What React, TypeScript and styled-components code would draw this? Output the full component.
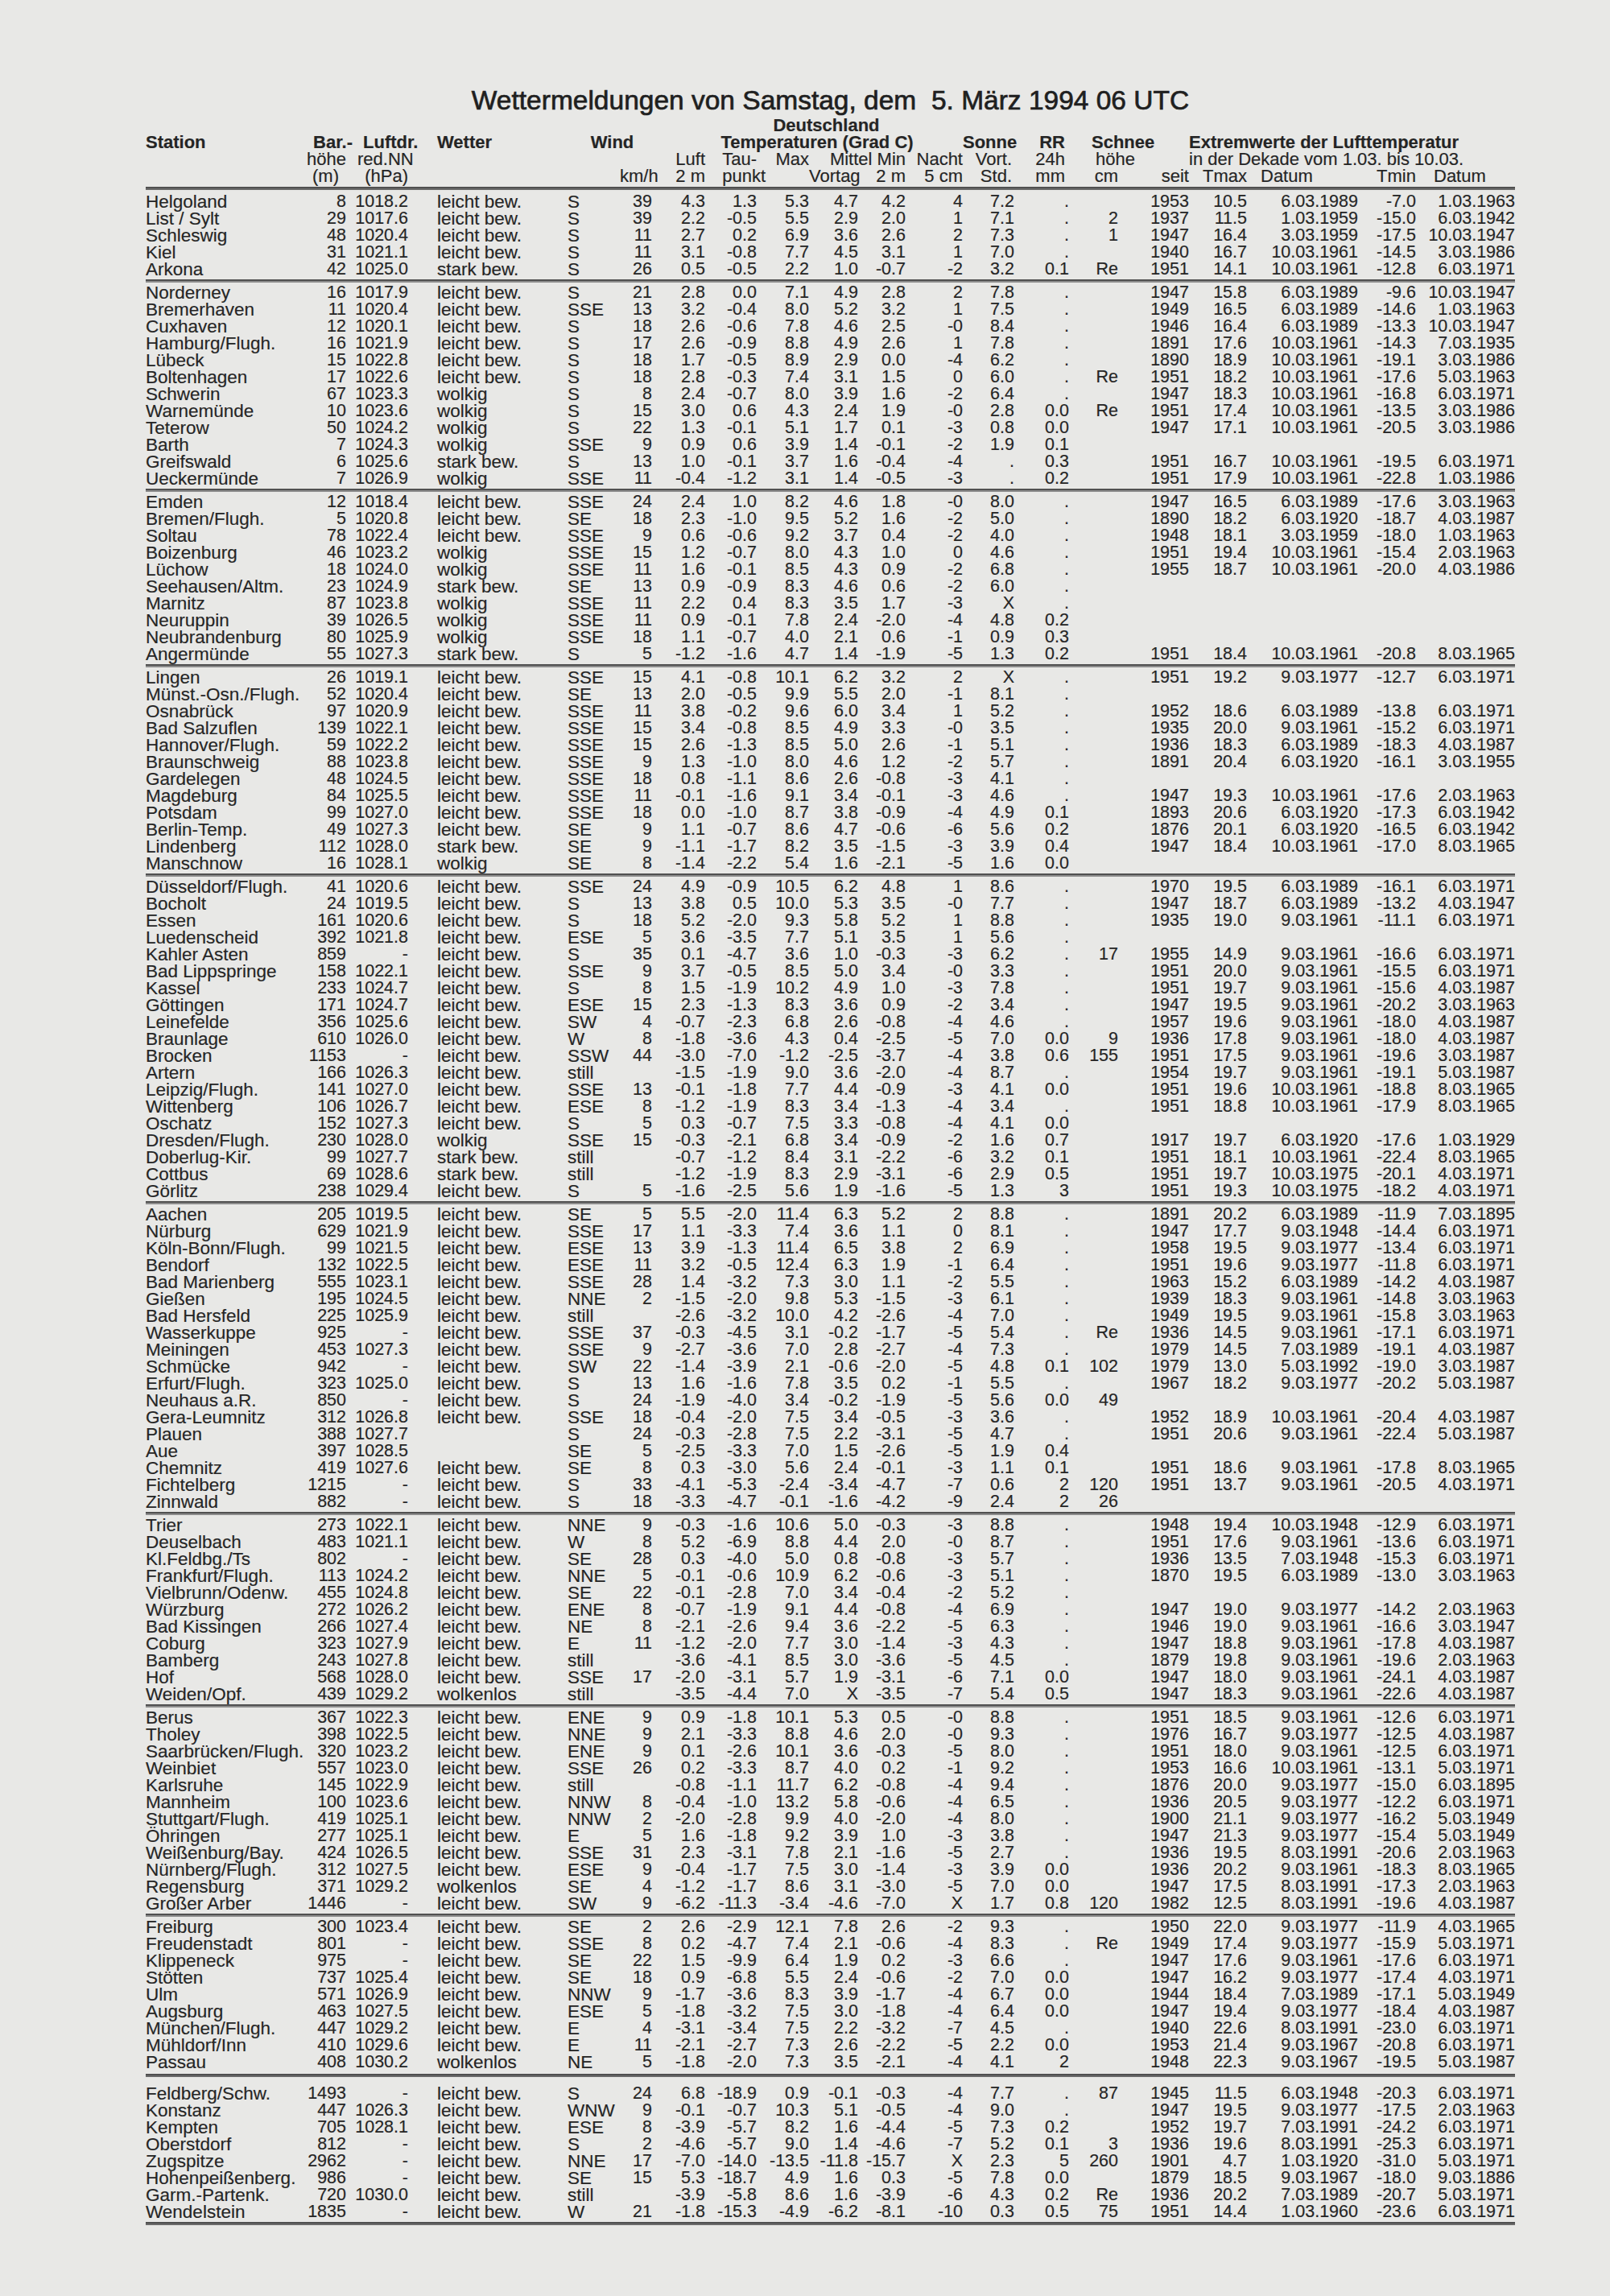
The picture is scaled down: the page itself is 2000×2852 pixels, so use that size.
import React from "react";
import styled, { createGlobalStyle } from "styled-components";

const GlobalStyle = createGlobalStyle`
  html, body {
    margin: 0;
    padding: 0;
    background: #e8e8e6;
  }
`;

const COLS = [190, 59, 77, 198, 65, 40, 66, 64, 65, 61, 59, 71, 64, 68, 61, 88, 72, 138, 72, 123];
const TEMPLATE = COLS.map((w) => `${w}px`).join(" ");

type Align = "left" | "right" | "center";

const COL_ALIGN: { align: Align; pad?: number; text?: boolean }[] = COLS.map((_, i) => {
  if (i === 0) return { align: "left", text: true };
  if (i === 3) return { align: "left", pad: 36, text: true };
  if (i === 4) return { align: "left", text: true };
  return { align: "right" };
});

const GROUPS: string[][] = [
  [
    "Helgoland|8|1018.2|leicht bew.|S|39|4.3|1.3|5.3|4.7|4.2|4|7.2|.||1953|10.5|6.03.1989|-7.0|1.03.1963",
    "List / Sylt|29|1017.6|leicht bew.|S|39|2.2|-0.5|5.5|2.9|2.0|1|7.1|.|2|1937|11.5|1.03.1959|-15.0|6.03.1942",
    "Schleswig|48|1020.4|leicht bew.|S|11|2.7|0.2|6.9|3.6|2.6|2|7.3|.|1|1947|16.4|3.03.1959|-17.5|10.03.1947",
    "Kiel|31|1021.1|leicht bew.|S|11|3.1|-0.8|7.7|4.5|3.1|1|7.0|.||1940|16.7|10.03.1961|-14.5|3.03.1986",
    "Arkona|42|1025.0|stark bew.|S|26|0.5|-0.5|2.2|1.0|-0.7|-2|3.2|0.1|Re|1951|14.1|10.03.1961|-12.8|6.03.1971",
  ],
  [
    "Norderney|16|1017.9|leicht bew.|S|21|2.8|0.0|7.1|4.9|2.8|2|7.8|.||1947|15.8|6.03.1989|-9.6|10.03.1947",
    "Bremerhaven|11|1020.4|leicht bew.|SSE|13|3.2|-0.4|8.0|5.2|3.2|1|7.5|.||1949|16.5|6.03.1989|-14.6|1.03.1963",
    "Cuxhaven|12|1020.1|leicht bew.|S|18|2.6|-0.6|7.8|4.6|2.5|-0|8.4|.||1946|16.4|6.03.1989|-13.3|10.03.1947",
    "Hamburg/Flugh.|16|1021.9|leicht bew.|S|17|2.6|-0.9|8.8|4.9|2.6|1|7.8|.||1891|17.6|10.03.1961|-14.3|7.03.1935",
    "Lübeck|15|1022.8|leicht bew.|S|18|1.7|-0.5|8.9|2.9|0.0|-4|6.2|.||1890|18.9|10.03.1961|-19.1|3.03.1986",
    "Boltenhagen|17|1022.6|leicht bew.|S|18|2.8|-0.3|7.4|3.1|1.5|0|6.0|.|Re|1951|18.2|10.03.1961|-17.6|5.03.1963",
    "Schwerin|67|1023.3|wolkig|S|8|2.4|-0.7|8.0|3.9|1.6|-2|6.4|.||1947|18.3|10.03.1961|-16.8|6.03.1971",
    "Warnemünde|10|1023.6|wolkig|S|15|3.0|0.6|4.3|2.4|1.9|-0|2.8|0.0|Re|1951|17.4|10.03.1961|-13.5|3.03.1986",
    "Teterow|50|1024.2|wolkig|S|22|1.3|-0.1|5.1|1.7|0.1|-3|0.8|0.0||1947|17.1|10.03.1961|-20.5|3.03.1986",
    "Barth|7|1024.3|wolkig|SSE|9|0.9|0.6|3.9|1.4|-0.1|-2|1.9|0.1||||||",
    "Greifswald|6|1025.6|stark bew.|S|13|1.0|-0.1|3.7|1.6|-0.4|-4|.|0.3||1951|16.7|10.03.1961|-19.5|6.03.1971",
    "Ueckermünde|7|1026.9|wolkig|SSE|11|-0.4|-1.2|3.1|1.4|-0.5|-3|.|0.2||1951|17.9|10.03.1961|-22.8|1.03.1986",
  ],
  [
    "Emden|12|1018.4|leicht bew.|SSE|24|2.4|1.0|8.2|4.6|1.8|-0|8.0|.||1947|16.5|6.03.1989|-17.6|3.03.1963",
    "Bremen/Flugh.|5|1020.8|leicht bew.|SE|18|2.3|-1.0|9.5|5.2|1.6|-2|5.0|.||1890|18.2|6.03.1920|-18.7|4.03.1987",
    "Soltau|78|1022.4|leicht bew.|SSE|9|0.6|-0.6|9.2|3.7|0.4|-2|4.0|.||1948|18.1|3.03.1959|-18.0|1.03.1963",
    "Boizenburg|46|1023.2|wolkig|SSE|15|1.2|-0.7|8.0|4.3|1.0|0|4.6|.||1951|19.4|10.03.1961|-15.4|2.03.1963",
    "Lüchow|18|1024.0|wolkig|SSE|11|1.6|-0.1|8.5|4.3|0.9|-2|6.8|.||1955|18.7|10.03.1961|-20.0|4.03.1986",
    "Seehausen/Altm.|23|1024.9|stark bew.|SE|13|0.9|-0.9|8.3|4.6|0.6|-2|6.0|.||||||",
    "Marnitz|87|1023.8|wolkig|SSE|11|2.2|0.4|8.3|3.5|1.7|-3|X|.||||||",
    "Neuruppin|39|1026.5|wolkig|SSE|11|0.9|-0.1|7.8|2.4|-2.0|-4|4.8|0.2||||||",
    "Neubrandenburg|80|1025.9|wolkig|SSE|18|1.1|-0.7|4.0|2.1|0.6|-1|0.9|0.3||||||",
    "Angermünde|55|1027.3|stark bew.|S|5|-1.2|-1.6|4.7|1.4|-1.9|-5|1.3|0.2||1951|18.4|10.03.1961|-20.8|8.03.1965",
  ],
  [
    "Lingen|26|1019.1|leicht bew.|SSE|15|4.1|-0.8|10.1|6.2|3.2|2|X|.||1951|19.2|9.03.1977|-12.7|6.03.1971",
    "Münst.-Osn./Flugh.|52|1020.4|leicht bew.|SE|13|2.0|-0.5|9.9|5.5|2.0|-1|8.1|.||||||",
    "Osnabrück|97|1020.9|leicht bew.|SSE|11|3.8|-0.2|9.6|6.0|3.4|1|5.2|.||1952|18.6|6.03.1989|-13.8|6.03.1971",
    "Bad Salzuflen|139|1022.1|leicht bew.|SSE|15|3.4|-0.8|8.5|4.9|3.3|-0|3.5|.||1935|20.0|9.03.1961|-15.2|6.03.1971",
    "Hannover/Flugh.|59|1022.2|leicht bew.|SSE|15|2.6|-1.3|8.5|5.0|2.6|-1|5.1|.||1936|18.3|6.03.1989|-18.3|4.03.1987",
    "Braunschweig|88|1023.8|leicht bew.|SSE|9|1.3|-1.0|8.0|4.6|1.2|-2|5.7|.||1891|20.4|6.03.1920|-16.1|3.03.1955",
    "Gardelegen|48|1024.5|leicht bew.|SSE|18|0.8|-1.1|8.6|2.6|-0.8|-3|4.1|.||||||",
    "Magdeburg|84|1025.5|leicht bew.|SSE|11|-0.1|-1.6|9.1|3.4|-0.1|-3|4.6|.||1947|19.3|10.03.1961|-17.6|2.03.1963",
    "Potsdam|99|1027.0|leicht bew.|SSE|18|0.0|-1.0|8.7|3.8|-0.9|-4|4.9|0.1||1893|20.6|6.03.1920|-17.3|6.03.1942",
    "Berlin-Temp.|49|1027.3|leicht bew.|SE|9|1.1|-0.7|8.6|4.7|-0.6|-6|5.6|0.2||1876|20.1|6.03.1920|-16.5|6.03.1942",
    "Lindenberg|112|1028.0|stark bew.|SE|9|-1.1|-1.7|8.2|3.5|-1.5|-3|3.9|0.4||1947|18.4|10.03.1961|-17.0|8.03.1965",
    "Manschnow|16|1028.1|wolkig|SE|8|-1.4|-2.2|5.4|1.6|-2.1|-5|1.6|0.0||||||",
  ],
  [
    "Düsseldorf/Flugh.|41|1020.6|leicht bew.|SSE|24|4.9|-0.9|10.5|6.2|4.8|1|8.6|.||1970|19.5|6.03.1989|-16.1|6.03.1971",
    "Bocholt|24|1019.5|leicht bew.|S|13|3.8|0.5|10.0|5.3|3.5|-0|7.7|.||1947|18.7|6.03.1989|-13.2|4.03.1947",
    "Essen|161|1020.6|leicht bew.|S|18|5.2|-2.0|9.3|5.8|5.2|1|8.8|.||1935|19.0|9.03.1961|-11.1|6.03.1971",
    "Luedenscheid|392|1021.8|leicht bew.|ESE|5|3.6|-3.5|7.7|5.1|3.5|1|5.6|.||||||",
    "Kahler Asten|859|-|leicht bew.|S|35|0.1|-4.7|3.6|1.0|-0.3|-3|6.2|.|17|1955|14.9|9.03.1961|-16.6|6.03.1971",
    "Bad Lippspringe|158|1022.1|leicht bew.|SSE|9|3.7|-0.5|8.5|5.0|3.4|-0|3.3|.||1951|20.0|9.03.1961|-15.5|6.03.1971",
    "Kassel|233|1024.7|leicht bew.|S|8|1.5|-1.9|10.2|4.9|1.0|-3|7.8|.||1951|19.7|9.03.1961|-15.6|4.03.1987",
    "Göttingen|171|1024.7|leicht bew.|ESE|15|2.3|-1.3|8.3|3.6|0.9|-2|3.4|.||1947|19.5|9.03.1961|-20.2|3.03.1963",
    "Leinefelde|356|1025.6|leicht bew.|SW|4|-0.7|-2.3|6.8|2.6|-0.8|-4|4.6|.||1957|19.6|9.03.1961|-18.0|4.03.1987",
    "Braunlage|610|1026.0|leicht bew.|W|8|-1.8|-3.6|4.3|0.4|-2.5|-5|7.0|0.0|9|1936|17.8|9.03.1961|-18.0|4.03.1987",
    "Brocken|1153|-|leicht bew.|SSW|44|-3.0|-7.0|-1.2|-2.5|-3.7|-4|3.8|0.6|155|1951|17.5|9.03.1961|-19.6|3.03.1987",
    "Artern|166|1026.3|leicht bew.|still||-1.5|-1.9|9.0|3.6|-2.0|-4|8.7|.||1954|19.7|9.03.1961|-19.1|5.03.1987",
    "Leipzig/Flugh.|141|1027.0|leicht bew.|SSE|13|-0.1|-1.8|7.7|4.4|-0.9|-3|4.1|0.0||1951|19.6|10.03.1961|-18.8|8.03.1965",
    "Wittenberg|106|1026.7|leicht bew.|ESE|8|-1.2|-1.9|8.3|3.4|-1.3|-4|3.4|.||1951|18.8|10.03.1961|-17.9|8.03.1965",
    "Oschatz|152|1027.3|leicht bew.|S|5|0.3|-0.7|7.5|3.3|-0.8|-4|4.1|0.0||||||",
    "Dresden/Flugh.|230|1028.0|wolkig|SSE|15|-0.3|-2.1|6.8|3.4|-0.9|-2|1.6|0.7||1917|19.7|6.03.1920|-17.6|1.03.1929",
    "Doberlug-Kir.|99|1027.7|stark bew.|still||-0.7|-1.2|8.4|3.1|-2.2|-6|3.2|0.1||1951|18.1|10.03.1961|-22.4|8.03.1965",
    "Cottbus|69|1028.6|stark bew.|still||-1.2|-1.9|8.3|2.9|-3.1|-6|2.9|0.5||1951|19.7|10.03.1975|-20.1|4.03.1971",
    "Görlitz|238|1029.4|leicht bew.|S|5|-1.6|-2.5|5.6|1.9|-1.6|-5|1.3|3||1951|19.3|10.03.1975|-18.2|4.03.1971",
  ],
  [
    "Aachen|205|1019.5|leicht bew.|SE|5|5.5|-2.0|11.4|6.3|5.2|2|8.8|.||1891|20.2|6.03.1989|-11.9|7.03.1895",
    "Nürburg|629|1021.9|leicht bew.|SSE|17|1.1|-3.3|7.4|3.6|1.1|0|8.1|.||1947|17.7|9.03.1948|-14.4|6.03.1971",
    "Köln-Bonn/Flugh.|99|1021.5|leicht bew.|ESE|13|3.9|-1.3|11.4|6.5|3.8|2|6.9|.||1958|19.5|9.03.1977|-13.4|6.03.1971",
    "Bendorf|132|1022.5|leicht bew.|ESE|11|3.2|-0.5|12.4|6.3|1.9|-1|6.4|.||1951|19.6|9.03.1977|-11.8|6.03.1971",
    "Bad Marienberg|555|1023.1|leicht bew.|SSE|28|1.4|-3.2|7.3|3.0|1.1|-2|5.5|.||1963|15.2|6.03.1989|-14.2|4.03.1987",
    "Gießen|195|1024.5|leicht bew.|NNE|2|-1.5|-2.0|9.8|5.3|-1.5|-3|6.1|.||1939|18.3|9.03.1961|-14.8|3.03.1963",
    "Bad Hersfeld|225|1025.9|leicht bew.|still||-2.6|-3.2|10.0|4.2|-2.6|-4|7.0|.||1949|19.5|9.03.1961|-15.8|3.03.1963",
    "Wasserkuppe|925|-|leicht bew.|SSE|37|-0.3|-4.5|3.1|-0.2|-1.7|-5|5.4|.|Re|1936|14.5|9.03.1961|-17.1|6.03.1971",
    "Meiningen|453|1027.3|leicht bew.|SSE|9|-2.7|-3.6|7.0|2.8|-2.7|-4|7.3|.||1979|14.5|7.03.1989|-19.1|4.03.1987",
    "Schmücke|942|-|leicht bew.|SW|22|-1.4|-3.9|2.1|-0.6|-2.0|-5|4.8|0.1|102|1979|13.0|5.03.1992|-19.0|3.03.1987",
    "Erfurt/Flugh.|323|1025.0|leicht bew.|S|13|1.6|-1.6|7.8|3.5|0.2|-1|5.5|.||1967|18.2|9.03.1977|-20.2|5.03.1987",
    "Neuhaus a.R.|850|-|leicht bew.|S|24|-1.9|-4.0|3.4|-0.2|-1.9|-5|5.6|0.0|49|||||",
    "Gera-Leumnitz|312|1026.8|leicht bew.|SSE|18|-0.4|-2.0|7.5|3.4|-0.5|-3|3.6|.||1952|18.9|10.03.1961|-20.4|4.03.1987",
    "Plauen|388|1027.7||S|24|-0.3|-2.8|7.5|2.2|-3.1|-5|4.7|.||1951|20.6|9.03.1961|-22.4|5.03.1987",
    "Aue|397|1028.5||SE|5|-2.5|-3.3|7.0|1.5|-2.6|-5|1.9|0.4||||||",
    "Chemnitz|419|1027.6|leicht bew.|SE|8|0.3|-3.0|5.6|2.4|-0.1|-3|1.1|0.1||1951|18.6|9.03.1961|-17.8|8.03.1965",
    "Fichtelberg|1215|-|leicht bew.|S|33|-4.1|-5.3|-2.4|-3.4|-4.7|-7|0.6|2|120|1951|13.7|9.03.1961|-20.5|4.03.1971",
    "Zinnwald|882|-|leicht bew.|S|18|-3.3|-4.7|-0.1|-1.6|-4.2|-9|2.4|2|26|||||",
  ],
  [
    "Trier|273|1022.1|leicht bew.|NNE|9|-0.3|-1.6|10.6|5.0|-0.3|-3|8.8|.||1948|19.4|10.03.1948|-12.9|6.03.1971",
    "Deuselbach|483|1021.1|leicht bew.|W|8|5.2|-6.9|8.8|4.4|2.0|-0|8.7|.||1951|17.6|9.03.1961|-13.6|6.03.1971",
    "Kl.Feldbg./Ts|802|-|leicht bew.|SE|28|0.3|-4.0|5.0|0.8|-0.8|-3|5.7|.||1936|13.5|7.03.1948|-15.3|6.03.1971",
    "Frankfurt/Flugh.|113|1024.2|leicht bew.|NNE|5|-0.1|-0.6|10.9|6.2|-0.6|-3|5.1|.||1870|19.5|6.03.1989|-13.0|3.03.1963",
    "Vielbrunn/Odenw.|455|1024.8|leicht bew.|SE|22|-0.1|-2.8|7.0|3.4|-0.4|-2|5.2|.||||||",
    "Würzburg|272|1026.2|leicht bew.|ENE|8|-0.7|-1.9|9.1|4.4|-0.8|-4|6.9|.||1947|19.0|9.03.1977|-14.2|2.03.1963",
    "Bad Kissingen|266|1027.4|leicht bew.|NE|8|-2.1|-2.6|9.4|3.6|-2.2|-5|6.3|.||1946|19.0|9.03.1961|-16.6|3.03.1947",
    "Coburg|323|1027.9|leicht bew.|E|11|-1.2|-2.0|7.7|3.0|-1.4|-3|4.3|.||1947|18.8|9.03.1961|-17.8|4.03.1987",
    "Bamberg|243|1027.8|leicht bew.|still||-3.6|-4.1|8.5|3.0|-3.6|-5|4.5|.||1879|19.8|9.03.1961|-19.6|2.03.1963",
    "Hof|568|1028.0|leicht bew.|SSE|17|-2.0|-3.1|5.7|1.9|-3.1|-6|7.1|0.0||1947|18.0|9.03.1961|-24.1|4.03.1987",
    "Weiden/Opf.|439|1029.2|wolkenlos|still||-3.5|-4.4|7.0|X|-3.5|-7|5.4|0.5||1947|18.3|9.03.1961|-22.6|4.03.1987",
  ],
  [
    "Berus|367|1022.3|leicht bew.|ENE|9|0.9|-1.8|10.1|5.3|0.5|-0|8.8|.||1951|18.5|9.03.1961|-12.6|6.03.1971",
    "Tholey|398|1022.5|leicht bew.|NNE|9|2.1|-3.3|8.8|4.6|2.0|-0|9.3|.||1976|16.7|9.03.1977|-12.5|4.03.1987",
    "Saarbrücken/Flugh.|320|1023.2|leicht bew.|ENE|9|0.1|-2.6|10.1|3.6|-0.3|-5|8.0|.||1951|18.0|9.03.1961|-12.5|6.03.1971",
    "Weinbiet|557|1023.0|leicht bew.|SSE|26|0.2|-3.3|8.7|4.0|0.2|-1|9.2|.||1953|16.6|10.03.1961|-13.1|5.03.1971",
    "Karlsruhe|145|1022.9|leicht bew.|still||-0.8|-1.1|11.7|6.2|-0.8|-4|9.4|.||1876|20.0|9.03.1977|-15.0|6.03.1895",
    "Mannheim|100|1023.6|leicht bew.|NNW|8|-0.4|-1.0|13.2|5.8|-0.6|-4|6.5|.||1936|20.5|9.03.1977|-12.2|6.03.1971",
    "Stuttgart/Flugh.|419|1025.1|leicht bew.|NNW|2|-2.0|-2.8|9.9|4.0|-2.0|-4|8.0|.||1900|21.1|9.03.1977|-16.2|5.03.1949",
    "Öhringen|277|1025.1|leicht bew.|E|5|1.6|-1.8|9.2|3.9|1.0|-3|3.8|.||1947|21.3|9.03.1977|-15.4|5.03.1949",
    "Weißenburg/Bay.|424|1026.5|leicht bew.|SSE|31|2.3|-3.1|7.8|2.1|-1.6|-5|2.7|.||1936|19.5|8.03.1991|-20.6|2.03.1963",
    "Nürnberg/Flugh.|312|1027.5|leicht bew.|ESE|9|-0.4|-1.7|7.5|3.0|-1.4|-3|3.9|0.0||1936|20.2|9.03.1961|-18.3|8.03.1965",
    "Regensburg|371|1029.2|wolkenlos|SE|4|-1.2|-1.7|8.6|3.1|-3.0|-5|7.0|0.0||1947|17.5|8.03.1991|-17.3|2.03.1963",
    "Großer Arber|1446|-|leicht bew.|SW|9|-6.2|-11.3|-3.4|-4.6|-7.0|X|1.7|0.8|120|1982|12.5|8.03.1991|-19.6|4.03.1987",
  ],
  [
    "Freiburg|300|1023.4|leicht bew.|SE|2|2.6|-2.9|12.1|7.8|2.6|-2|9.3|.||1950|22.0|9.03.1977|-11.9|4.03.1965",
    "Freudenstadt|801|-|leicht bew.|SSE|8|0.2|-4.7|7.4|2.1|-0.6|-4|8.3|.|Re|1949|17.4|9.03.1977|-15.9|5.03.1971",
    "Klippeneck|975|-|leicht bew.|SE|22|1.5|-9.9|6.4|1.9|0.2|-3|6.6|.||1947|17.6|9.03.1961|-17.6|6.03.1971",
    "Stötten|737|1025.4|leicht bew.|SE|18|0.9|-6.8|5.5|2.4|-0.6|-2|7.0|0.0||1947|16.2|9.03.1977|-17.4|4.03.1971",
    "Ulm|571|1026.9|leicht bew.|NNW|9|-1.7|-3.6|8.3|3.9|-1.7|-4|6.7|0.0||1944|18.4|7.03.1989|-17.1|5.03.1949",
    "Augsburg|463|1027.5|leicht bew.|ESE|5|-1.8|-3.2|7.5|3.0|-1.8|-4|6.4|0.0||1947|19.4|9.03.1977|-18.4|4.03.1987",
    "München/Flugh.|447|1029.2|leicht bew.|E|4|-3.1|-3.4|7.5|2.2|-3.2|-7|4.5|.||1940|22.6|8.03.1991|-23.0|6.03.1971",
    "Mühldorf/Inn|410|1029.6|leicht bew.|E|11|-2.1|-2.7|7.3|2.6|-2.2|-5|2.2|0.0||1953|21.4|9.03.1967|-20.8|6.03.1971",
    "Passau|408|1030.2|wolkenlos|NE|5|-1.8|-2.0|7.3|3.5|-2.1|-4|4.1|2||1948|22.3|9.03.1967|-19.5|5.03.1987",
  ],
  [
    "Feldberg/Schw.|1493|-|leicht bew.|S|24|6.8|-18.9|0.9|-0.1|-0.3|-4|7.7|.|87|1945|11.5|6.03.1948|-20.3|6.03.1971",
    "Konstanz|447|1026.3|leicht bew.|WNW|9|-0.1|-0.7|10.3|5.1|-0.5|-4|9.0|.||1947|19.5|9.03.1977|-17.5|2.03.1963",
    "Kempten|705|1028.1|leicht bew.|ESE|8|-3.9|-5.7|8.2|1.6|-4.4|-5|7.3|0.2||1952|19.7|7.03.1991|-24.2|6.03.1971",
    "Oberstdorf|812|-|leicht bew.|S|2|-4.6|-5.7|9.0|1.4|-4.6|-7|5.2|0.1|3|1936|19.6|8.03.1991|-25.3|6.03.1971",
    "Zugspitze|2962|-|leicht bew.|NNE|17|-7.0|-14.0|-13.5|-11.8|-15.7|X|2.3|5|260|1901|4.7|1.03.1920|-31.0|5.03.1971",
    "Hohenpeißenberg.|986|-|leicht bew.|SE|15|5.3|-18.7|4.9|1.6|0.3|-5|7.8|0.0||1879|18.5|9.03.1967|-18.0|9.03.1886",
    "Garm.-Partenk.|720|1030.0|leicht bew.|still||-3.9|-5.8|8.6|1.6|-3.9|-6|4.3|0.2|Re|1936|20.2|7.03.1989|-20.7|5.03.1971",
    "Wendelstein|1835|-|leicht bew.|W|21|-1.8|-15.3|-4.9|-6.2|-8.1|-10|0.3|0.5|75|1951|14.4|1.03.1960|-23.6|6.03.1971",
  ],
];

type HeadItem = { t: string; col: string; align: Align; ml?: number; mr?: number };

const HEAD_LINES: { bold: boolean; items: HeadItem[] }[] = [
  {
    bold: true,
    items: [
      { t: "Station", col: "1", align: "left" },
      { t: "Bar.-", col: "2", align: "right", mr: -8 },
      { t: "Luftdr.", col: "3", align: "left", ml: 21 },
      { t: "Wetter", col: "4", align: "left", ml: 36 },
      { t: "Wind", col: "5 / 7", align: "center", ml: 6 },
      { t: "Temperaturen (Grad C)", col: "7 / 13", align: "center", ml: 24 },
      { t: "Sonne", col: "13", align: "right", mr: -2 },
      { t: "RR", col: "14", align: "right", mr: 5 },
      { t: "Schnee", col: "15", align: "left", ml: 28 },
      { t: "Extremwerte der Lufttemperatur", col: "17 / 21", align: "left" },
    ],
  },
  {
    bold: false,
    items: [
      { t: "höhe", col: "2", align: "right" },
      { t: "red.NN", col: "3", align: "left", ml: 14 },
      { t: "Luft", col: "7", align: "right" },
      { t: "Tau-", col: "8", align: "right" },
      { t: "Max", col: "9", align: "right" },
      { t: "Mittel Min", col: "10 / 12", align: "right" },
      { t: "Nacht", col: "12", align: "right" },
      { t: "Vort.", col: "13", align: "right", mr: 3 },
      { t: "24h", col: "14", align: "right", mr: 5 },
      { t: "höhe", col: "15", align: "left", ml: 33 },
      { t: "in der Dekade vom 1.03. bis 10.03.", col: "17 / 21", align: "left" },
    ],
  },
  {
    bold: false,
    items: [
      { t: "(m)", col: "2", align: "right", mr: 9 },
      { t: "(hPa)", col: "3", align: "right" },
      { t: "km/h", col: "6", align: "right" },
      { t: "2 m", col: "7", align: "right" },
      { t: "punkt", col: "8", align: "right", mr: -11 },
      { t: "Vortag", col: "10", align: "right" },
      { t: "2 m", col: "11", align: "right" },
      { t: "5 cm", col: "12", align: "right" },
      { t: "Std.", col: "13", align: "right", mr: 3 },
      { t: "mm", col: "14", align: "right", mr: 5 },
      { t: "cm", col: "15", align: "right" },
      { t: "seit", col: "16", align: "right" },
      { t: "Tmax", col: "17", align: "right" },
      { t: "Datum", col: "18", align: "left", ml: 17 },
      { t: "Tmin", col: "19", align: "right" },
      { t: "Datum", col: "20", align: "left", ml: 22 },
    ],
  },
];

const Page = styled.div`
  min-height: 2852px;
  box-sizing: border-box;
  padding: 105px 0 0 181px;
  background: #e8e8e6;
  color: #242424;
  font-family: "Liberation Sans", Arial, Helvetica, sans-serif;
  -webkit-text-stroke: 0.2px #3a3a3a;
`;

const Sheet = styled.div`
  width: 1701px;
`;

const Title = styled.h1`
  margin: 0;
  font-size: 33.5px;
  line-height: 40px;
  font-weight: 400;
  text-align: center;
  white-space: pre;
  color: #1f1f1f;
  -webkit-text-stroke: 0.7px #1f1f1f;
`;

const Subtitle = styled.div`
  font-size: 22px;
  line-height: 21px;
  font-weight: 700;
  text-align: center;
  margin-left: -10px;
`;

const Grid = styled.div<{ $bold?: boolean }>`
  display: grid;
  grid-template-columns: ${TEMPLATE};
  height: 21px;
  font-size: 21.5px;
  line-height: 21px;
  font-weight: ${(p) => (p.$bold ? 700 : 400)};
`;

const HeadCell = styled.span<{ $col: string; $align: Align; $ml: number; $mr: number }>`
  grid-column: ${(p) => p.$col};
  grid-row: 1;
  font-size: 22px;
  text-align: ${(p) => p.$align};
  margin-left: ${(p) => p.$ml}px;
  margin-right: ${(p) => p.$mr}px;
  white-space: nowrap;
`;

const Cell = styled.span<{ $align: Align; $pad: number; $text: boolean }>`
  text-align: ${(p) => p.$align};
  padding-left: ${(p) => p.$pad}px;
  font-size: ${(p) => (p.$text ? 22.5 : 21.5)}px;
  white-space: nowrap;
  overflow: visible;
`;

type RuleKind = "head" | "group" | "last" | "end";

const RULE_MARGINS: Record<RuleKind, [number, number]> = {
  head: [3, 4],
  group: [2, 2],
  last: [4, 10],
  end: [2, 0],
};

const Rule = styled.div<{ $kind: RuleKind }>`
  height: 4px;
  box-sizing: border-box;
  margin-top: ${(p) => RULE_MARGINS[p.$kind][0]}px;
  margin-bottom: ${(p) => RULE_MARGINS[p.$kind][1]}px;
  border-top: 2px solid #505050;
  border-bottom: 2px solid ${(p) => (p.$kind === "group" ? "#8c8c8c" : "#6a6a6a")};
`;

function DataRow({ line }: { line: string }) {
  const f = line.split("|");
  while (f.length < 20) f.push("");
  return (
    <Grid>
      {COLS.map((_, i) => (
        <Cell
          key={i}
          $align={COL_ALIGN[i].align}
          $pad={COL_ALIGN[i].pad ?? 0}
          $text={!!COL_ALIGN[i].text}
        >
          {f[i]}
        </Cell>
      ))}
    </Grid>
  );
}

export default function App() {
  return (
    <>
      <GlobalStyle />
      <Page>
        <Sheet>
          <Title>{"Wettermeldungen von Samstag, dem  5. März 1994 06 UTC"}</Title>
          <Subtitle>Deutschland</Subtitle>
          {HEAD_LINES.map((line, li) => (
            <Grid key={li} $bold={line.bold}>
              {line.items.map((it, ii) => (
                <HeadCell key={ii} $col={it.col} $align={it.align} $ml={it.ml ?? 0} $mr={it.mr ?? 0}>
                  {it.t}
                </HeadCell>
              ))}
            </Grid>
          ))}
          <Rule $kind="head" />
          {GROUPS.map((g, gi) => (
            <React.Fragment key={gi}>
              {g.map((r, ri) => (
                <DataRow key={ri} line={r} />
              ))}
              <Rule $kind={gi === GROUPS.length - 2 ? "last" : gi === GROUPS.length - 1 ? "end" : "group"} />
            </React.Fragment>
          ))}
        </Sheet>
      </Page>
    </>
  );
}
